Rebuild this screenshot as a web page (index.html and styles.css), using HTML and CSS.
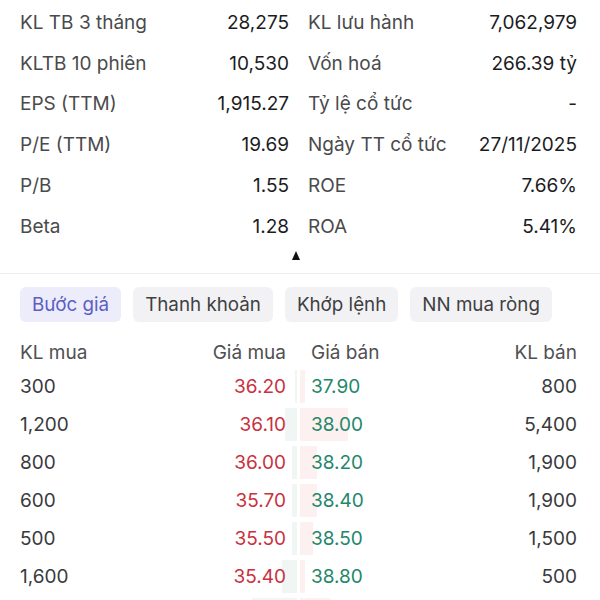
FILE: index.html
```html
<!DOCTYPE html>
<html lang="vi">
<head>
    <meta charset="UTF-8">
    <meta name="viewport" content="width=device-width, initial-scale=1.0">
    <title>Thông tin cổ phiếu</title>
    <link rel="stylesheet" href="styles.css">
</head>
<body>
    <div class="stats">
        <div class="stat-col">
            <div class="stat-row"><span class="stat-label">KL TB 3 tháng</span><span class="stat-value">28,275</span></div>
            <div class="stat-row"><span class="stat-label">KLTB 10 phiên</span><span class="stat-value">10,530</span></div>
            <div class="stat-row"><span class="stat-label">EPS (TTM)</span><span class="stat-value">1,915.27</span></div>
            <div class="stat-row"><span class="stat-label">P/E (TTM)</span><span class="stat-value">19.69</span></div>
            <div class="stat-row"><span class="stat-label">P/B</span><span class="stat-value">1.55</span></div>
            <div class="stat-row"><span class="stat-label">Beta</span><span class="stat-value">1.28</span></div>
        </div>
        <div class="stat-col">
            <div class="stat-row"><span class="stat-label">KL lưu hành</span><span class="stat-value">7,062,979</span></div>
            <div class="stat-row"><span class="stat-label">Vốn hoá</span><span class="stat-value">266.39 tỷ</span></div>
            <div class="stat-row"><span class="stat-label">Tỷ lệ cổ tức</span><span class="stat-value">-</span></div>
            <div class="stat-row"><span class="stat-label">Ngày TT cổ tức</span><span class="stat-value">27/11/2025</span></div>
            <div class="stat-row"><span class="stat-label">ROE</span><span class="stat-value">7.66%</span></div>
            <div class="stat-row"><span class="stat-label">ROA</span><span class="stat-value">5.41%</span></div>
        </div>
    </div>

    <div class="collapse">
        <span class="collapse-arrow"></span>
    </div>

    <div class="tabs">
        <div class="tab active">Bước giá</div>
        <div class="tab">Thanh khoản</div>
        <div class="tab">Khớp lệnh</div>
        <div class="tab">NN mua ròng</div>
    </div>

    <div class="book">
        <div class="book-row book-head">
            <div class="half bid"><span>KL mua</span><span>Giá mua</span></div>
            <div class="half ask"><span>Giá bán</span><span>KL bán</span></div>
        </div>

        <div class="book-row">
            <div class="half bid"><i class="bar" style="width: 2px"></i><span class="vol">300</span><span class="down">36.20</span></div>
            <div class="half ask"><i class="bar" style="width: 5px"></i><span class="up">37.90</span><span class="vol">800</span></div>
        </div>
        <div class="book-row">
            <div class="half bid"><i class="bar" style="width: 12px"></i><span class="vol">1,200</span><span class="down">36.10</span></div>
            <div class="half ask"><i class="bar" style="width: 48px"></i><span class="up">38.00</span><span class="vol">5,400</span></div>
        </div>
        <div class="book-row">
            <div class="half bid"><i class="bar" style="width: 5px"></i><span class="vol">800</span><span class="down">36.00</span></div>
            <div class="half ask"><i class="bar" style="width: 17px"></i><span class="up">38.20</span><span class="vol">1,900</span></div>
        </div>
        <div class="book-row">
            <div class="half bid"><i class="bar" style="width: 5px"></i><span class="vol">600</span><span class="down">35.70</span></div>
            <div class="half ask"><i class="bar" style="width: 17px"></i><span class="up">38.40</span><span class="vol">1,900</span></div>
        </div>
        <div class="book-row">
            <div class="half bid"><i class="bar" style="width: 5px"></i><span class="vol">500</span><span class="down">35.50</span></div>
            <div class="half ask"><i class="bar" style="width: 13px"></i><span class="up">38.50</span><span class="vol">1,500</span></div>
        </div>
        <div class="book-row">
            <div class="half bid"><i class="bar" style="width: 15px"></i><span class="vol">1,600</span><span class="down">35.40</span></div>
            <div class="half ask"><i class="bar" style="width: 5px"></i><span class="up">38.80</span><span class="vol">500</span></div>
        </div>
        <div class="book-row">
            <div class="half bid"><i class="bar" style="width: 45px"></i></div>
            <div class="half ask"><i class="bar" style="width: 30px"></i></div>
        </div>
    </div>
</body>
</html>
```

FILE: styles.css
```css
* {
    margin: 0;
    padding: 0;
    box-sizing: border-box;
}

body {
    font-family: Inter, 'Noto Sans', sans-serif;
    font-size: 19px;
    background: #ffffff;
    color: #1c1c1e;
    width: 600px;
    height: 600px;
    overflow: hidden;
}

/* Bloc chiffres clés */
.stats {
    display: grid;
    grid-template-columns: 1fr 1fr;
    column-gap: 19px;
    padding: 2px 23px 0 20px;
}

.stat-row {
    display: flex;
    justify-content: space-between;
    align-items: center;
    height: 40.8px;
}

.stat-label {
    color: #4a4a4c;
}

.stat-value {
    color: #1c1c1e;
}

.collapse {
    display: flex;
    justify-content: center;
    padding: 4px 0 13px 0;
    border-bottom: 1.5px solid #eeeeef;
}

.collapse-arrow {
    width: 0;
    height: 0;
    margin-right: 8px;
    border-left: 4.5px solid transparent;
    border-right: 4.5px solid transparent;
    border-bottom: 9px solid #111111;
}

/* Onglets */
.tabs {
    display: flex;
    gap: 12px;
    padding: 13px 20px 0 20px;
}

.tab {
    height: 35px;
    line-height: 35px;
    padding: 0 12px;
    border-radius: 6px;
    font-size: 18.8px;
    background: #f2f2f4;
    color: #3f3f42;
}

.tab.active {
    background: #ececfb;
    color: #5b5ec6;
}

/* Carnet d'ordres */
.book {
    padding: 15px 23px 0 20px;
}

.book-row {
    display: grid;
    grid-template-columns: 1fr 1fr;
    column-gap: 3px;
    height: 38px;
}

.book-head {
    height: 31px;
    color: #505053;
}

.half {
    position: relative;
    display: flex;
    justify-content: space-between;
    align-items: center;
}

.half span {
    position: relative;
}

.half.bid {
    padding-right: 11px;
}

.half.ask {
    padding-left: 11px;
}

.bar {
    position: absolute;
    top: 2px;
    bottom: 3px;
}

.bid .bar {
    right: 0;
    background: #eff6f3;
}

.ask .bar {
    left: 0;
    background: #fdf0f0;
}

.vol {
    color: #3a3a3c;
}

.down {
    color: #c8323f;
}

.up {
    color: #23876a;
}
```
